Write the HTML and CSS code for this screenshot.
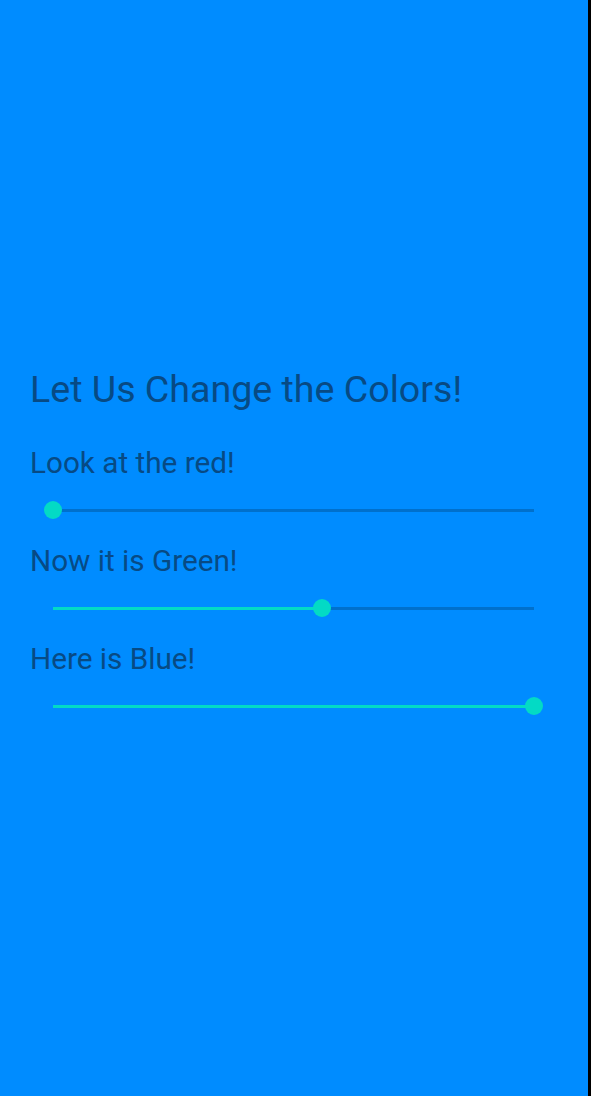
FILE: index.html
```html
<!DOCTYPE html>
<html>
<head>
<meta charset="utf-8">
<link rel="stylesheet" href="styles.css">
</head>
<body>
<div class="screen">
  <h1 class="title">Let Us Change the Colors!</h1>
  <div class="groups">
    <div class="group">
      <div class="label">Look at the red!</div>
      <div class="slider">
        <div class="track">
          <div class="active" style="width:0%"></div>
          <div class="thumb" style="left:0%"></div>
        </div>
      </div>
    </div>
    <div class="group">
      <div class="label">Now it is Green!</div>
      <div class="slider">
        <div class="track">
          <div class="active" style="width:56%"></div>
          <div class="thumb" style="left:56%"></div>
        </div>
      </div>
    </div>
    <div class="group">
      <div class="label">Here is Blue!</div>
      <div class="slider">
        <div class="track">
          <div class="active" style="width:100%"></div>
          <div class="thumb" style="left:100%"></div>
        </div>
      </div>
    </div>
  </div>
</div>
</body>
</html>
```
FILE: styles.css
```css
html, body {
  margin: 0;
  padding: 0;
  background: #000;
}
body {
  font-family: Roboto, "Noto Sans", sans-serif;
}
.screen {
  width: 588px;
  height: 1096px;
  background: #008cff;
  box-sizing: border-box;
  padding: 366px 31px 0 30px;
  color: #074a84;
}
.title {
  margin: 0;
  font-size: 37.6px;
  line-height: 46px;
  font-weight: 400;
}
.groups {
  margin-top: 33px;
  display: flex;
  flex-direction: column;
  gap: 15px;
}
.group {
  display: flex;
  flex-direction: column;
  gap: 11px;
}
.label {
  font-size: 29.7px;
  line-height: 36px;
}
.slider {
  height: 36px;
  padding: 0 23px;
  display: flex;
  align-items: center;
}
.track {
  position: relative;
  flex: 1;
  height: 3px;
  background: #0070cc;
}
.active {
  height: 100%;
  background: #03dac5;
}
.thumb {
  position: absolute;
  top: 50%;
  width: 18px;
  height: 18px;
  margin: -9px 0 0 -9px;
  border-radius: 50%;
  background: #03dac5;
}
```
